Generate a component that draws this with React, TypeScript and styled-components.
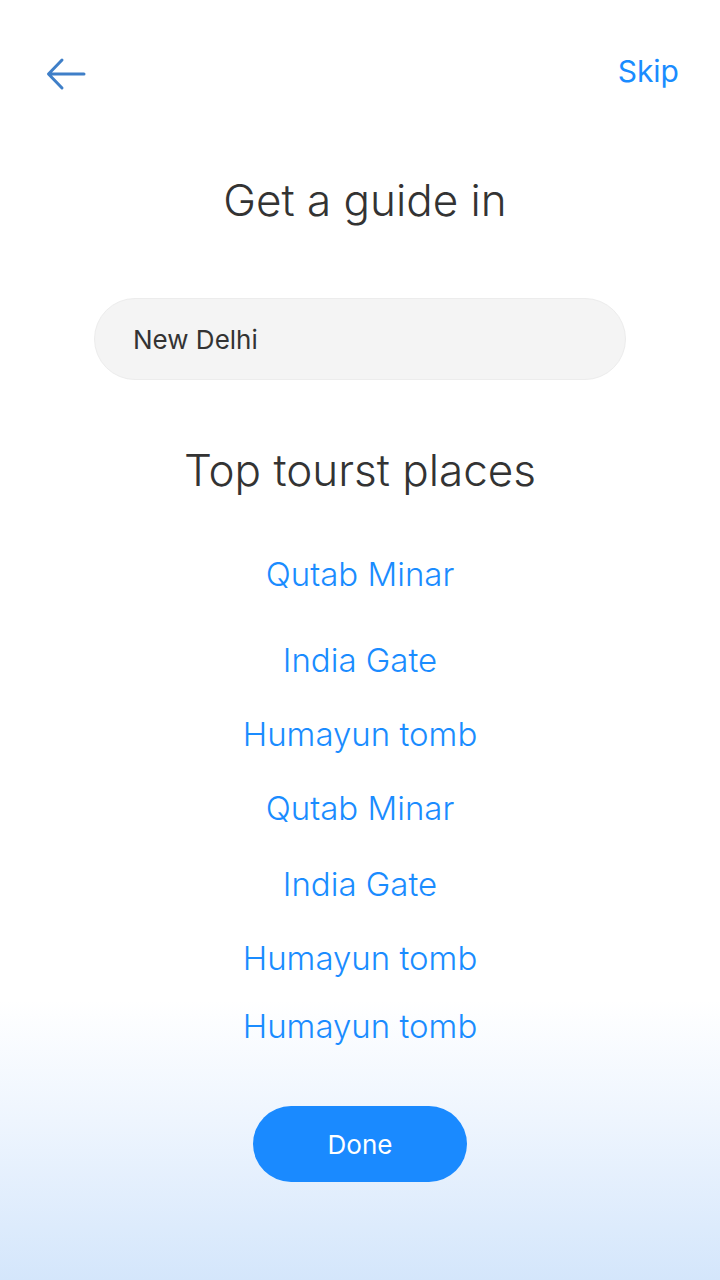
import { createGlobalStyle, styled } from "styled-components";

const GlobalStyle = createGlobalStyle`
  html, body {
    margin: 0;
    padding: 0;
  }
  body {
    font-family: Inter, "Liberation Sans", sans-serif;
    -webkit-font-smoothing: antialiased;
  }
`;

const Screen = styled.div`
  width: 720px;
  min-height: 1280px;
  box-sizing: border-box;
  display: flex;
  flex-direction: column;
  align-items: center;
  background: linear-gradient(
    to bottom,
    #ffffff 0px,
    #ffffff 1000px,
    #eef5fe 1120px,
    #d4e6fb 1280px
  );
`;

const TopBar = styled.header`
  width: 100%;
  box-sizing: border-box;
  display: flex;
  justify-content: space-between;
  align-items: center;
  padding: 52px 41px 0 42px;
  height: 96px;
`;

const BackButton = styled.button`
  border: none;
  background: none;
  padding: 4px;
  display: flex;
  cursor: pointer;
`;

const SkipLink = styled.a`
  font-size: 30px;
  font-weight: 400;
  color: #1a8cff;
  text-decoration: none;
  line-height: 40px;
  margin-top: -6px;
`;

const Title = styled.h1`
  margin: 76px 0 0;
  font-size: 44px;
  font-weight: 300;
  color: #333333;
  line-height: 56px;
  padding-left: 10px;
`;

const CityInput = styled.input`
  margin-top: 70px;
  width: 532px;
  height: 82px;
  box-sizing: border-box;
  border-radius: 41px;
  border: 1px solid #ececec;
  background: #f4f4f4;
  padding: 0 38px;
  font-family: inherit;
  font-size: 26px;
  color: #333333;
  outline: none;
`;

const SectionTitle = styled.h2`
  margin: 62px 0 0;
  font-size: 44px;
  font-weight: 300;
  color: #333333;
  line-height: 56px;
`;

const PlaceList = styled.ul`
  list-style: none;
  margin: 0;
  padding: 0;
  display: flex;
  flex-direction: column;
  align-items: center;
`;

const Place = styled.li<{ $top: number }>`
  margin-top: ${(p) => p.$top}px;
  font-size: 33px;
  font-weight: 300;
  color: #1a8cff;
  line-height: 44px;
`;

const DoneButton = styled.button`
  margin-top: 58px;
  width: 214px;
  height: 76px;
  border: none;
  border-radius: 38px;
  background: #1a8aff;
  color: #ffffff;
  font-family: inherit;
  font-size: 26px;
  font-weight: 400;
  cursor: pointer;
`;

const places = [
  { name: "Qutab Minar", top: 54 },
  { name: "India Gate", top: 42 },
  { name: "Humayun tomb", top: 30 },
  { name: "Qutab Minar", top: 30 },
  { name: "India Gate", top: 32 },
  { name: "Humayun tomb", top: 30 },
  { name: "Humayun tomb", top: 24 },
];

function ArrowLeft() {
  return (
    <svg width="40" height="34" viewBox="0 0 40 34" fill="none">
      <path
        d="M38 17H3M16 3L2.5 17L16 31"
        stroke="#3f7fc8"
        strokeWidth="3"
        strokeLinecap="round"
        strokeLinejoin="round"
      />
    </svg>
  );
}

function App() {
  return (
    <Screen>
      <GlobalStyle />
      <TopBar>
        <BackButton aria-label="Back">
          <ArrowLeft />
        </BackButton>
        <SkipLink href="#">Skip</SkipLink>
      </TopBar>
      <Title>Get a guide in</Title>
      <CityInput defaultValue="New Delhi" />
      <SectionTitle>Top tourst places</SectionTitle>
      <PlaceList>
        {places.map((place, i) => (
          <Place key={i} $top={place.top}>
            {place.name}
          </Place>
        ))}
      </PlaceList>
      <DoneButton>Done</DoneButton>
    </Screen>
  );
}

export default App;
